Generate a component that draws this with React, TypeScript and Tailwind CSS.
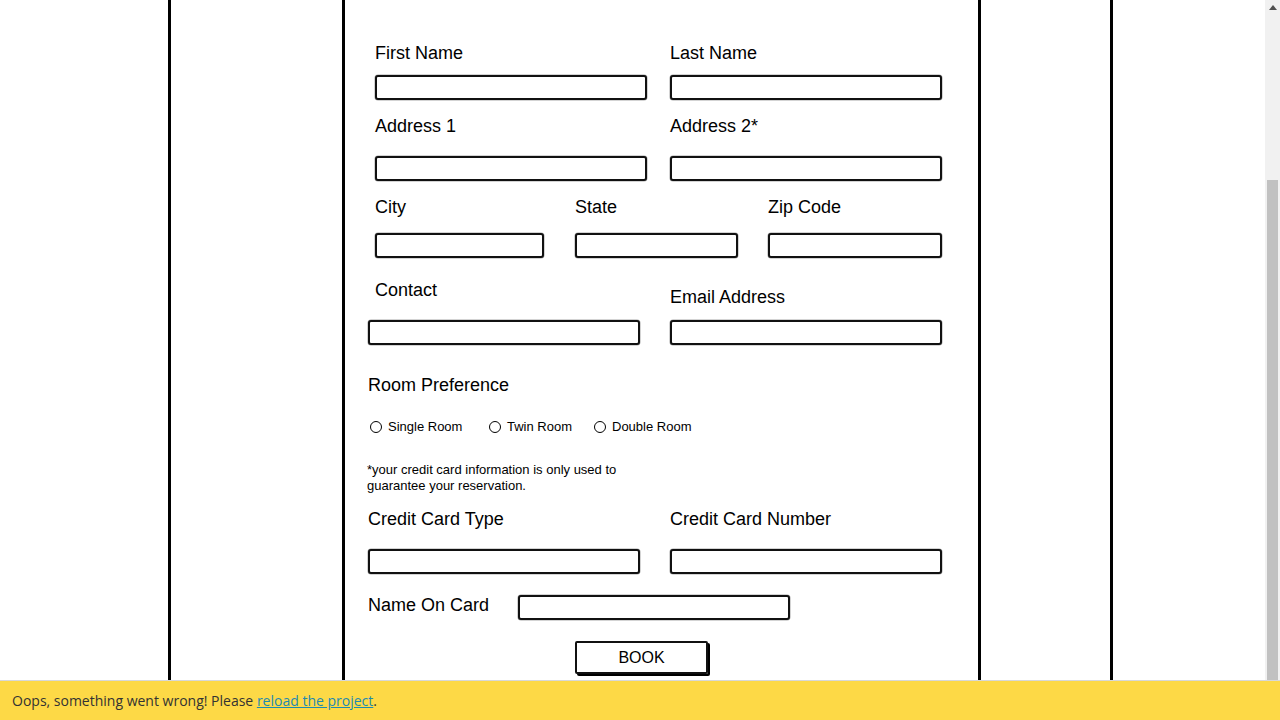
import React from 'react'

const label = 'text-[18px] leading-[20px] text-black whitespace-nowrap'
const box = 'h-[25px] border-2 border-[#111] rounded-[3px] bg-white shadow-[0_0_0_0.5px_rgba(0,0,0,0.35)]'

function Field({ text, width, gap, labelClass = '' }: { text: string; width: string; gap: string; labelClass?: string }) {
  return (
    <div className="flex flex-col">
      <div className={`${label} ${labelClass}`}>{text}</div>
      <div className={`${box} ${width} ${gap}`} />
    </div>
  )
}

function Radio({ text, className = '' }: { text: string; className?: string }) {
  return (
    <div className={`flex items-center ${className}`}>
      <span className="w-[12px] h-[12px] rounded-full border border-black" />
      <span className="ml-[6px] text-[13px] leading-[16px]">{text}</span>
    </div>
  )
}

export default function App() {
  return (
    <div
      className="relative flex h-[720px] w-[1280px] overflow-hidden bg-white text-black"
      style={{ fontFamily: '"Liberation Sans", Arial, sans-serif' }}
    >
      <div className="flex-1 h-full">
        <div className="ml-[168px] w-[945px] h-full border-x-[3px] border-black">
          <div className="ml-[171px] w-[639px] h-full border-x-[3px] border-black">
            <div className="pt-[43px] pl-[23px]">
              {/* names */}
              <div className="flex ml-[7px] gap-[23px]">
                <Field text="First Name" width="w-[272px]" gap="mt-[12px]" />
                <Field text="Last Name" width="w-[272px]" gap="mt-[12px]" />
              </div>

              {/* address */}
              <div className="flex ml-[7px] gap-[23px] mt-[16px]">
                <Field text="Address 1" width="w-[272px]" gap="mt-[20px]" />
                <Field text="Address 2*" width="w-[272px]" gap="mt-[20px]" />
              </div>

              {/* city / state / zip */}
              <div className="flex ml-[7px] mt-[16px]">
                <Field text="City" width="w-[169px]" gap="mt-[16px]" />
                <div className="ml-[31px]">
                  <Field text="State" width="w-[163px]" gap="mt-[16px]" />
                </div>
                <div className="ml-[30px]">
                  <Field text="Zip Code" width="w-[174px]" gap="mt-[16px]" />
                </div>
              </div>

              {/* contact / email */}
              <div className="flex mt-[22px] gap-[30px]">
                <div className="flex flex-col">
                  <div className={`${label} ml-[7px]`}>Contact</div>
                  <div className={`${box} w-[272px] mt-[20px]`} />
                </div>
                <div className="flex flex-col">
                  <div className={`${label} mt-[7px]`}>Email Address</div>
                  <div className={`${box} w-[272px] mt-[13px]`} />
                </div>
              </div>

              {/* room preference */}
              <div className={`${label} mt-[30px]`}>Room Preference</div>
              <div className="flex mt-[24px] ml-[2px]">
                <Radio text="Single Room" className="w-[119px]" />
                <Radio text="Twin Room" className="w-[105px]" />
                <Radio text="Double Room" />
              </div>

              <p className="mt-[27px] -ml-[1px] text-[13px] leading-[16px] w-[270px]">
                *your credit card information is only used to guarantee your reservation.
              </p>

              {/* credit card */}
              <div className="flex mt-[15px] gap-[30px]">
                <Field text="Credit Card Type" width="w-[272px]" gap="mt-[20px]" />
                <Field text="Credit Card Number" width="w-[272px]" gap="mt-[20px]" />
              </div>

              <div className="flex items-start mt-[21px]">
                <div className={`${label} w-[150px]`}>Name On Card</div>
                <div className={`${box} w-[272px]`} />
              </div>

              <div className="mt-[21px] ml-[207px] w-[133px] h-[33px] border-2 border-[#111] rounded-[2px] shadow-[2px_2px_0_0_#000] flex items-center justify-center text-[16px]">
                BOOK
              </div>
            </div>
          </div>
        </div>
      </div>

      {/* scrollbar */}
      <div className="w-[15px] h-full bg-[#f1f1f1] flex flex-col items-center">
        <div className="mt-[5px] w-0 h-0 border-x-[4px] border-x-transparent border-b-[5px] border-b-[#505050]" />
        <div className="mt-[170px] w-[11px] flex-1 bg-[#c1c1c1]" />
      </div>

      {/* error bar */}
      <div
        className="absolute left-0 bottom-0 w-full h-[40px] bg-[#fdd946] border-t border-[#d8d8d8] flex items-center pl-[12px] text-[14px] text-[#333]"
        style={{ fontFamily: '"Open Sans", sans-serif' }}
      >
        <span>
          Oops, something went wrong! Please{' '}
          <span className="underline text-[#1f8ab0]">reload the project</span>.
        </span>
      </div>
    </div>
  )
}
